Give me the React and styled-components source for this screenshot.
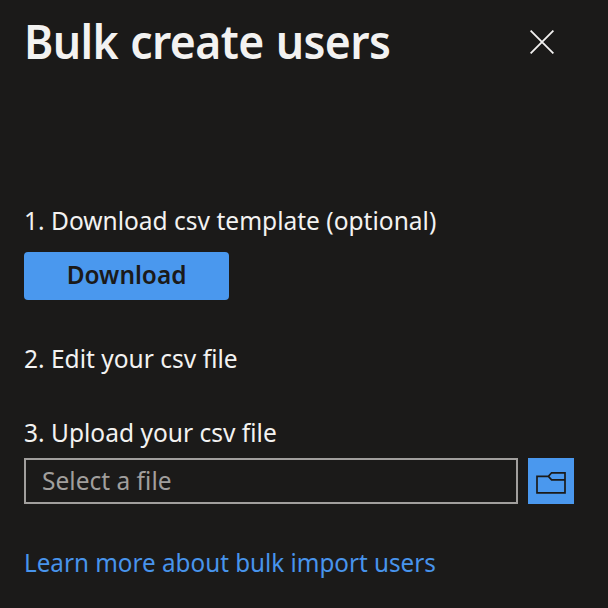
import React from 'react';
import styled, { createGlobalStyle } from 'styled-components';

const GlobalStyle = createGlobalStyle`
  body { margin: 0; background: #1b1a19; }
  * { box-sizing: border-box; }
`;
const Panel = styled.main`
  height: 608px; padding: 0 24px; overflow: hidden;
  background: #1b1a19; color: #f3f2f1;
  font-family: "Noto Sans", "Open Sans", sans-serif; font-size: 25.5px; line-height: 34px;
`;
const Text = styled.span`
  display: inline-block; white-space: nowrap; transform-origin: ${p => p.$origin || 'left'} center;
  transform: scaleX(${p => p.$scale || 0.962});
`;
const Header = styled.header`
  display: flex; justify-content: space-between; align-items: center; height: 84px; padding-right: 30px;
`;
const Title = styled.h1`
  margin: -2px 0 0; font-size: 47px; line-height: 60px; font-weight: 570;
  letter-spacing: -0.6px; word-spacing: 1px;
`;
const IconButton = styled.button`
  display: flex; flex: none; padding: 0; border: 0; background: none; color: #f3f2f1;
`;
const Steps = styled.section`
  margin-top: 119px;
`;
const Step = styled.div`
  margin-bottom: ${p => p.$gap}px;
`;
const Label = styled.p`
  margin: 0; height: 34px;
`;
const Download = styled.button`
  display: flex; justify-content: center; align-items: center; margin-top: 15px;
  width: 205px; height: 48px; border: 0; border-radius: 4px; padding: 0 0 4px;
  background: #4a98ee; color: #1b1a19; font: 600 25.5px/34px "Noto Sans", sans-serif;
`;
const Upload = styled.div`
  display: flex; gap: 10px; margin-top: 9px;
`;
const Field = styled.div`
  display: flex; align-items: center; width: 494px; height: 46px; padding: 0 0 2px 16px;
  border: 2px solid #a19f9d; color: #a19f9d;
`;
const Browse = styled.button`
  display: flex; padding: 0; border: 0; width: 46px; height: 46px; background: #4a98ee;
`;
const Link = styled.a`
  display: block; height: 34px; color: #4894ec; text-decoration: none;
`;

export default function App() {
  return (
    <Panel>
      <GlobalStyle />
      <Header>
        <Title><Text $scale={0.947}>Bulk create users</Text></Title>
        <IconButton aria-label="Close">
          <svg width="24" height="24" viewBox="0 0 24 24" fill="none" stroke="currentColor" strokeWidth="1.8"><path d="M.6.6l22.8 22.8M23.4.6L.6 23.4" /></svg>
        </IconButton>
      </Header>
      <Steps>
        <Step $gap={41}>
          <Label><Text>1. Download csv template (optional)</Text></Label>
          <Download><Text $origin="center" $scale={0.957}>Download</Text></Download>
        </Step>
        <Step $gap={40}><Label><Text>2. Edit your csv file</Text></Label></Step>
        <Step $gap={41}>
          <Label><Text>3. Upload your csv file</Text></Label>
          <Upload>
            <Field><Text>Select a file</Text></Field>
            <Browse aria-label="Browse files">
              <svg width="46" height="46" viewBox="0 0 46 46" fill="none" stroke="#1b1a19" strokeWidth="1.7"><path d="M9 34.8V18.4h11.4l3.2-3.6H37v20zM20.4 18.4l3.2 3.4H37" /></svg>
            </Browse>
          </Upload>
        </Step>
        <Link href="#"><Text $scale={0.95}>Learn more about bulk import users</Text></Link>
      </Steps>
    </Panel>
  );
}
